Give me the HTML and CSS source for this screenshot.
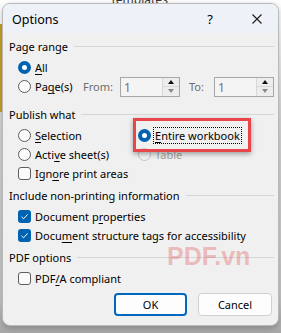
FILE: index.html
```html
<!DOCTYPE html>
<html>
<head>
<meta charset="utf-8">
<link rel="stylesheet" href="styles.css">
</head>
<body>
<div class="backdrop">
  <div class="peek"><span>Templates</span></div>
  <div class="dialog">
    <div class="titlebar">
      <span class="title">Options</span>
      <span class="help">?</span>
      <svg class="close" width="10" height="10" viewBox="0 0 10 10"><path d="M0.5 0.5L9.5 9.5M9.5 0.5L0.5 9.5" stroke="#1a1a1a" stroke-width="1.1" fill="none"/></svg>
    </div>
    <div class="content">
      <div class="section">
        <div class="header"><span>Page range</span><i class="rule"></i></div>
        <div class="rows">
          <div class="row"><span class="radio on"></span><span class="label"><u>A</u>ll</span></div>
          <div class="row">
            <span class="radio"></span><span class="label pages">Pa<u>g</u>e(s)</span>
            <span class="dis from">From:</span>
            <span class="spin"><span class="val">1</span><span class="btns"><span class="up"></span><span class="down"></span></span></span>
            <span class="dis to">To:</span>
            <span class="spin"><span class="val">1</span><span class="btns"><span class="up"></span><span class="down"></span></span></span>
          </div>
        </div>
      </div>
      <div class="section s2">
        <div class="header"><span>Publish what</span><i class="rule"></i></div>
        <div class="rows grid">
          <div class="row"><span class="radio"></span><span class="label"><u>S</u>election</span></div>
          <div class="row"><span class="radio on"></span><span class="label focus"><u>E</u>ntire workbook</span></div>
          <div class="row"><span class="radio"></span><span class="label">Acti<u>v</u>e sheet(s)</span></div>
          <div class="row disabled"><span class="radio"></span><span class="label">Table</span></div>
          <div class="row"><span class="check"></span><span class="label">Ign<u>o</u>re print areas</span></div>
          <div class="highlight"></div>
        </div>
      </div>
      <div class="section s3">
        <div class="header"><span>Include non-printing information</span><i class="rule"></i></div>
        <div class="rows">
          <div class="row"><span class="check on"><svg width="13" height="13" viewBox="0 0 13 13"><path d="M3.5 6.8L5.6 8.8L9.6 4.4" stroke="#fff" stroke-width="1" fill="none"/></svg></span><span class="label">Document p<u>r</u>operties</span></div>
          <div class="row"><span class="check on"><svg width="13" height="13" viewBox="0 0 13 13"><path d="M3.5 6.8L5.6 8.8L9.6 4.4" stroke="#fff" stroke-width="1" fill="none"/></svg></span><span class="label">Docu<u>m</u>ent structure tags for accessibility</span></div>
        </div>
      </div>
      <div class="section s4">
        <div class="header"><span>PDF options</span><i class="rule"></i></div>
        <div class="rows">
          <div class="row"><span class="check"></span><span class="label">PDF<u>/</u>A compliant</span></div>
        </div>
        <div class="watermark">PDF.vn</div>
      </div>
      <div class="buttons">
        <button class="btn default">OK</button>
        <button class="btn cancel">Cancel</button>
      </div>
    </div>
  </div>
</div>
</body>
</html>
```
FILE: styles.css
```css
html, body {
  margin: 0;
  padding: 0;
}
body {
  width: 281px;
  height: 333px;
  overflow: hidden;
  background: #b8b8b8;
  font-family: "Noto Sans", "Open Sans", sans-serif;
  font-size: 11px;
  color: #000;
}
.backdrop {
  height: 333px;
  padding-left: 2px;
  box-sizing: border-box;
  background:
    linear-gradient(#ffffff 0, #ffffff 24px, #c9a227 24px, #c9a227 112px, transparent 112px) left top / 2px 100% no-repeat,
    linear-gradient(#ffffff 0, #ffffff 24px, #d9d9d9 120px, #c8c8c8 300px, #a8a8a8 333px);
}
.peek {
  height: 3px;
  overflow: hidden;
  position: relative;
}
.peek span {
  position: absolute;
  left: 108px;
  top: -9px;
  font-size: 12px;
  color: #333;
}
.dialog {
  width: 277px;
  height: 323px;
  box-sizing: border-box;
  border: 1px solid #b9b9b9;
  border-radius: 8px;
  background: #f0f0f0;
  overflow: hidden;
  box-shadow: 0 2px 6px rgba(0, 0, 0, 0.25);
}
.titlebar {
  height: 29px;
  background: #eef2f8;
  display: flex;
  align-items: center;
  padding-left: 9px;
  padding-right: 16px;
}
.title {
  font-size: 12.5px;
  flex: 1;
  padding-top: 1px;
}
.help {
  font-size: 13px;
  margin-right: 39px;
  padding-top: 1px;
}
.close {
  display: block;
}
.content {
  padding: 5px 0 0 6px;
}
.header {
  height: 16px;
  display: flex;
  align-items: center;
}
.header span {
  white-space: nowrap;
}
.rule {
  flex: 1;
  height: 1px;
  background: #d6d6d6;
  margin-left: 6px;
  margin-right: 4px;
}
.rows {
  padding-top: 4px;
  padding-left: 9px;
}
.row {
  height: 19px;
  display: flex;
  align-items: center;
  white-space: nowrap;
}
.radio {
  width: 13px;
  height: 13px;
  box-sizing: border-box;
  border: 1px solid #5d5d5d;
  border-radius: 50%;
  background: #fbfbfb;
  flex: none;
  position: relative;
}
.radio.on {
  border: none;
  background: #0063b1;
}
.radio.on::after {
  content: "";
  position: absolute;
  left: 4px;
  top: 4px;
  width: 5px;
  height: 5px;
  border-radius: 50%;
  background: #fff;
}
.check {
  width: 13px;
  height: 13px;
  box-sizing: border-box;
  border: 1px solid #5d5d5d;
  border-radius: 3px;
  background: #fbfbfb;
  flex: none;
}
.check.on {
  border: none;
  background: #0063b1;
}
.check svg {
  display: block;
}
.label {
  margin-left: 4px;
}
.label.pages {
  width: 48px;
}
u {
  text-decoration-thickness: 1px;
  text-underline-offset: 2px;
}
.dis {
  color: #6d6d6d;
}
.from {
  width: 37px;
}
.to {
  margin-left: 9px;
  width: 25px;
}
.spin {
  width: 60px;
  height: 20px;
  box-sizing: border-box;
  border: 1px solid #a6a6a6;
  background: #f4f4f4;
  display: flex;
  flex: none;
}
.val {
  flex: 1;
  color: #7a6a8a;
  padding-left: 3px;
  line-height: 19px;
  font-size: 12px;
}
.btns {
  width: 16px;
  display: flex;
  flex-direction: column;
  border-left: 1px solid #d8d8d8;
}
.btns span {
  flex: 1;
  display: flex;
  align-items: center;
  justify-content: center;
  background: #ededed;
}
.up {
  border-bottom: 1px solid #d8d8d8;
}
.up::after {
  content: "";
  border-left: 3px solid transparent;
  border-right: 3px solid transparent;
  border-bottom: 4px solid #111;
}
.down::after {
  content: "";
  border-left: 3px solid transparent;
  border-right: 3px solid transparent;
  border-top: 4px solid #8a8a8a;
}
.section.s2 {
  margin-top: 10px;
}
.grid {
  display: grid;
  grid-template-columns: 120px auto;
  position: relative;
}
.disabled .radio {
  border-color: #c4c4c4;
  background: #f3f3f3;
}
.disabled .label {
  color: #a3a3a3;
}
.focus {
  outline: 1px dotted #000;
  outline-offset: 0;
  padding: 0 1px;
  margin-left: 3px;
}
.highlight {
  position: absolute;
  left: 124px;
  top: -4px;
  width: 118px;
  height: 34px;
  box-sizing: border-box;
  border: 3px solid #e8464b;
  box-shadow: 0 2px 5px rgba(0, 0, 0, 0.35);
}
.section.s3 {
  margin-top: 4px;
}
.section.s4 {
  margin-top: 4px;
  position: relative;
}
.watermark {
  position: absolute;
  left: 158px;
  top: -7px;
  font-family: "Liberation Sans", Arial, sans-serif;
  font-weight: bold;
  font-size: 25px;
  color: rgba(225, 70, 70, 0.32);
}
.buttons {
  display: flex;
  justify-content: flex-end;
  gap: 11px;
  padding-right: 6px;
  margin-top: 5px;
}
.btn {
  width: 73px;
  height: 23px;
  box-sizing: border-box;
  background: #fdfdfd;
  border: 1px solid #d0d0d0;
  border-radius: 4px;
  font-family: "Noto Sans", "Open Sans", sans-serif;
  font-size: 11px;
  color: #000;
  padding: 0;
}
.btn.cancel {
  width: 74px;
}
.btn.default {
  border: 2px solid #0067c0;
}
```
